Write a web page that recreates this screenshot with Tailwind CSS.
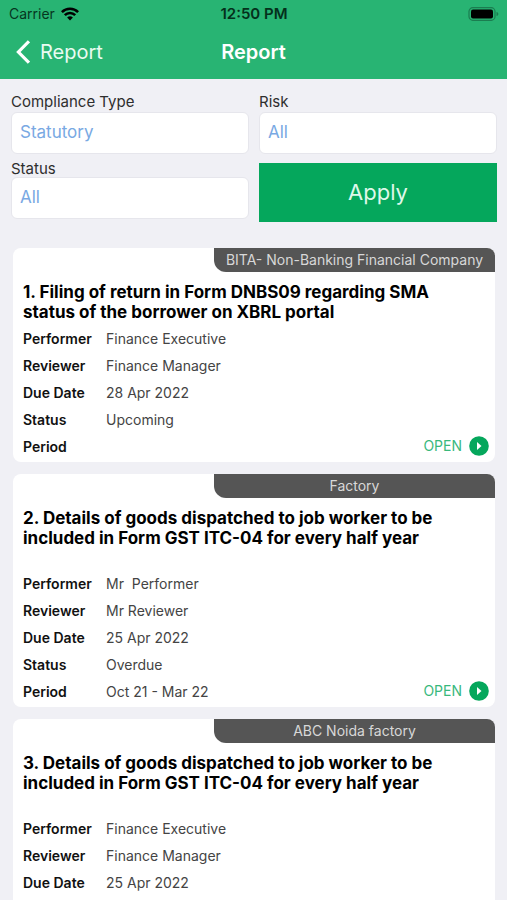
<!DOCTYPE html>
<html lang="en">
<head>
<meta charset="utf-8">
<meta name="viewport" content="width=device-width, initial-scale=1">
<title>Report</title>
<script src="https://cdn.jsdelivr.net/npm/@tailwindcss/browser@4"></script>
</head>
<body class="flex h-screen flex-col overflow-hidden bg-[#f0f0f5] font-['Inter','Liberation_Sans',sans-serif] text-[#2e2e2e]">
<header class="h-[79px] shrink-0 bg-[#28b473]">
  <div class="grid h-7 grid-cols-3 items-center pr-2 pl-[9px] text-sm leading-5 text-[#06361f]">
    <div class="flex items-center gap-1.5">
      <span>Carrier</span>
      <svg class="h-[14px] w-[18px] text-black" viewBox="0 0 18 14" fill="none" stroke="currentColor" stroke-width="2.600" aria-hidden="true">
        <path d="M.9 5.1a11.600 11.600 0 0 1 16.200 0"/><path d="M3.800 8.200a7.400 7.400 0 0 1 10.400 0"/>
        <path d="M9 13.600 6.100 10.600a4.100 4.100 0 0 1 5.800 0z" fill="currentColor" stroke="none"/>
      </svg>
    </div>
    <span class="text-center text-[15px] font-semibold whitespace-nowrap text-[#04301b]">12:50 PM</span>
    <svg class="h-[14px] w-[31px] justify-self-end" viewBox="0 0 31 14" aria-hidden="true">
      <rect x="1" y=".7" width="26" height="12.600" rx="3.800" fill="none" stroke="#1b7d50" stroke-width="1.200"/>
      <rect x="3" y="2.600" width="22" height="8.800" rx="2" fill="#000"/>
      <path d="M28.500 5v4c1.200-.4 1.800-1.100 1.800-2s-.6-1.600-1.800-2z" fill="#1b7d50"/>
    </svg>
  </div>
  <nav class="grid h-12 grid-cols-3 items-center px-4 text-xl text-white">
    <a href="#" class="flex items-center gap-2.5 text-[#e9fbf1]">
      <svg class="h-6 w-[14px]" viewBox="0 0 14 24" fill="none" stroke="#fff" stroke-width="3.200" stroke-linecap="square" stroke-linejoin="miter" aria-hidden="true"><path d="M11.800 2.400 2.400 12l9.400 9.600"/></svg>
      <span>Report</span>
    </a>
    <h1 class="text-center font-semibold">Report</h1>
  </nav>
</header>
<main class="min-h-0 flex-1 overflow-y-auto [scrollbar-width:none]">
  <form class="grid grid-cols-2 gap-2.5 pt-[13px] pr-2.5 pl-[11px]" onsubmit="return false">
    <div class="flex flex-col">
      <label for="type" class="h-5 text-[15px] leading-5">Compliance Type</label>
      <select id="type" class="h-[42px] appearance-none rounded-md border border-[#e6e6ec] bg-white px-2 text-[17px] text-[#79a9e3]"><option>Statutory</option></select>
      <label for="status" class="mt-[5px] h-[18px] text-[15px] leading-5">Status</label>
      <select id="status" class="h-[42px] appearance-none rounded-md border border-[#e6e6ec] bg-white px-2 text-[17px] text-[#79a9e3]"><option>All</option></select>
    </div>
    <div class="flex flex-col">
      <label for="risk" class="h-5 text-[15px] leading-5">Risk</label>
      <select id="risk" class="h-[42px] appearance-none rounded-md border border-[#e6e6ec] bg-white px-2 text-[17px] text-[#79a9e3]"><option>All</option></select>
      <button type="submit" class="mt-[9px] h-[59px] bg-[#05a75c] text-[22px] text-[#dff8ea]">Apply</button>
    </div>
  </form>

  <section class="flex flex-col gap-3 pt-[26px] pr-3 pb-3 pl-[13px]">
    <article class="relative rounded-lg bg-white pb-0.5">
      <div class="ml-auto flex h-6 w-[281px] items-center justify-center rounded-tr-lg rounded-bl-xl bg-[#555] text-sm whitespace-nowrap text-[#d8d8d8]">BITA- Non-Banking Financial Company</div>
      <h2 class="mt-2.5 min-h-[43px] pr-12 pl-2.5 text-[17px] leading-5 font-bold text-black">1. Filing of return in Form DNBS09 regarding SMA<br>status of the borrower on XBRL portal</h2>
      <dl class="grid auto-rows-[27px] grid-cols-[83px_1fr] items-center pl-2.5 text-sm">
        <dt class="font-semibold text-[#111]">Performer</dt><dd class="text-[#444]">Finance Executive</dd>
        <dt class="font-semibold text-[#111]">Reviewer</dt><dd class="text-[#444]">Finance Manager</dd>
        <dt class="font-semibold text-[#111]">Due Date</dt><dd class="text-[#444]">28 Apr 2022</dd>
        <dt class="font-semibold text-[#111]">Status</dt><dd class="text-[#444]">Upcoming</dd>
        <dt class="font-semibold text-[#111]">Period</dt><dd></dd>
      </dl>
      <a href="#" class="absolute right-1.5 bottom-1.5 flex items-center gap-[7px] text-sm text-[#38b87c]">OPEN
        <svg class="size-5" viewBox="0 0 20 20" aria-hidden="true"><circle cx="10" cy="10" r="9.800" fill="#05a75c"/><path d="M8 6l4.500 4L8 14z" fill="#fff"/></svg>
      </a>
    </article>

    <article class="relative rounded-lg bg-white pb-0.5">
      <div class="ml-auto flex h-6 w-[281px] items-center justify-center rounded-tr-lg rounded-bl-xl bg-[#555] text-sm whitespace-nowrap text-[#d8d8d8]">Factory</div>
      <h2 class="mt-2.5 min-h-[62px] pr-12 pl-2.5 text-[17px] leading-5 font-bold text-black">2. Details of goods dispatched to job worker to be<br>included in Form GST ITC-04 for every half year</h2>
      <dl class="grid auto-rows-[27px] grid-cols-[83px_1fr] items-center pl-2.5 text-sm">
        <dt class="font-semibold text-[#111]">Performer</dt><dd class="whitespace-pre text-[#444]">Mr  Performer</dd>
        <dt class="font-semibold text-[#111]">Reviewer</dt><dd class="text-[#444]">Mr Reviewer</dd>
        <dt class="font-semibold text-[#111]">Due Date</dt><dd class="text-[#444]">25 Apr 2022</dd>
        <dt class="font-semibold text-[#111]">Status</dt><dd class="text-[#444]">Overdue</dd>
        <dt class="font-semibold text-[#111]">Period</dt><dd class="text-[#444]">Oct 21 - Mar 22</dd>
      </dl>
      <a href="#" class="absolute right-1.5 bottom-1.5 flex items-center gap-[7px] text-sm text-[#38b87c]">OPEN
        <svg class="size-5" viewBox="0 0 20 20" aria-hidden="true"><circle cx="10" cy="10" r="9.800" fill="#05a75c"/><path d="M8 6l4.500 4L8 14z" fill="#fff"/></svg>
      </a>
    </article>

    <article class="relative rounded-t-lg bg-white pb-4">
      <div class="ml-auto flex h-6 w-[281px] items-center justify-center rounded-tr-lg rounded-bl-xl bg-[#555] text-sm whitespace-nowrap text-[#d8d8d8]">ABC Noida factory</div>
      <h2 class="mt-2.5 min-h-[62px] pr-12 pl-2.5 text-[17px] leading-5 font-bold text-black">3. Details of goods dispatched to job worker to be<br>included in Form GST ITC-04 for every half year</h2>
      <dl class="grid auto-rows-[27px] grid-cols-[83px_1fr] items-center pl-2.5 text-sm">
        <dt class="font-semibold text-[#111]">Performer</dt><dd class="text-[#444]">Finance Executive</dd>
        <dt class="font-semibold text-[#111]">Reviewer</dt><dd class="text-[#444]">Finance Manager</dd>
        <dt class="font-semibold text-[#111]">Due Date</dt><dd class="text-[#444]">25 Apr 2022</dd>
      </dl>
    </article>
  </section>
</main>
</body>
</html>
